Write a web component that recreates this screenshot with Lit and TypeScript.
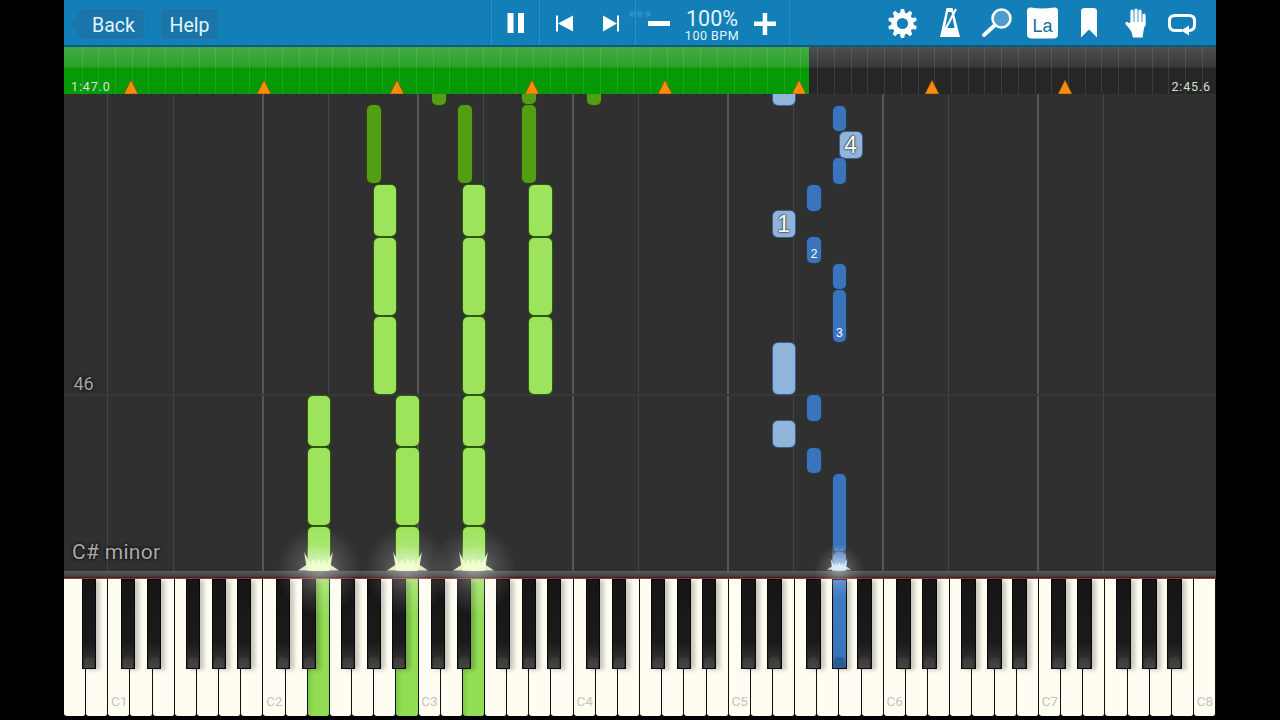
import { LitElement, html, css, svg } from "lit";
import { customElement } from "lit/decorators.js";

type N = [number, number, number, number, string, string?];
const DG = "dg", LG = "lg", B = "bl", LB = "lb";
const notes: N[] = [
  [367, 105, 14, 78, DG], [457.5, 105, 14, 78, DG], [522, 105, 14, 78, DG],
  [432, 90, 14, 14.5, DG], [522, 90, 14, 14, DG], [586.5, 90, 14, 14.5, DG],
  [373.5, 185, 22.5, 51, LG], [373.5, 238, 22.5, 77, LG], [373.5, 316.5, 22.5, 77, LG],
  [462.5, 185, 22.5, 51, LG], [462.5, 238, 22.5, 77, LG], [462.5, 316.5, 22.5, 77, LG],
  [529, 185, 22.5, 51, LG], [529, 238, 22.5, 77, LG], [529, 316.5, 22.5, 77, LG],
  [307.5, 395.5, 22.5, 50.5, LG], [307.5, 447.5, 22.5, 77, LG], [307.5, 526.5, 22.5, 44, LG],
  [396, 395.5, 22.5, 50.5, LG], [396, 447.5, 22.5, 77, LG], [396, 526.5, 22.5, 44, LG],
  [462.5, 395.5, 22.5, 50.5, LG], [462.5, 447.5, 22.5, 77, LG], [462.5, 526.5, 22.5, 44, LG],
  [772.5, 90, 22.5, 14.5, LB], [772.5, 211, 22.5, 25.5, LB, "1"], [839.5, 132, 22.5, 26, LB, "4"],
  [772.5, 342.5, 22.5, 51, LB], [772.5, 421, 22.5, 25.5, LB],
  [832.5, 105.5, 13.5, 25.5, B], [832.5, 158, 13.5, 25.5, B], [807, 185, 14, 25.5, B],
  [807, 237, 14, 26, B, "2"], [832.5, 263.5, 13.5, 25.5, B], [832.5, 290, 13.5, 52, B, "3"],
  [807, 395, 14, 25.5, B], [807, 447.5, 14, 25.5, B], [832.5, 473.5, 13.5, 78, B], [832.5, 552, 13.5, 19, B],
];
const strong = [262, 417, 572, 727, 882, 1037];
const weak = [107, 173, 328, 483, 638, 793, 948, 1103];
const ticks = Array.from({ length: 69 }, (_, i) => 64 + 17.5 + i * 16.72);
const marks = [131, 264, 397, 532, 665, 799, 932, 1065];
const whites = Array.from({ length: 52 }, (_, i) => i);
const blackOffsets = [19.7, 45.7, 84.7, 110.7, 135.7];
const blacks = [89, ...Array.from({ length: 7 }, (_, o) => blackOffsets.map((b) => 108.3 + o * 155.06 + b)).flat()];
const hitWhite: Record<number, string> = { 11: "g", 15: "g", 18: "g" };
const labels: Record<number, string> = { 2: "C1", 9: "C2", 16: "C3", 23: "C4", 30: "C5", 37: "C6", 44: "C7", 51: "C8" };
const glows: [number, string][] = [[318.5, "gg"], [407, "gg"], [473.5, "gg"], [839, "gb"]];

const spark = (color: string) => svg`<svg class="sv" viewBox="0 0 40 20" preserveAspectRatio="none"><path d="M0 19.5 8 14 6 1 12 13 15 8 17 13 20 7 23 13 25 8 28 13 34 1 32 14 40 19.5Z" fill="${color}" opacity=".9"/></svg>`;

@customElement("app-root")
export class AppRoot extends LitElement {
  static styles = css`
    :host { display: block; width: 1280px; height: 720px; background: #000; font-family: "Roboto", "Liberation Sans", sans-serif; overflow: hidden; }
    .app { position: relative; width: 1152px; height: 720px; margin: 0 auto; background: #303030; overflow: hidden; }
    .top { height: 45px; background: #127fb9; border-bottom: 2px solid #0b5a80; display: flex; align-items: center; position: relative; }
    .btn { height: 32px; margin-top: 3px; padding-top: 2px; background: #1a75aa; border: 1px solid #1f7db2; border-radius: 4px; color: #e4f4fb; font-size: 19.5px; display: flex; align-items: center; justify-content: center; box-sizing: border-box; }
    .back { width: 74px; margin-left: 7px; padding-left: 11px; clip-path: polygon(0 50%, 11px 0, 100% 0, 100% 100%, 11px 100%); }
    .help { width: 59px; margin-left: 15px; }
    .sep { position: absolute; top: 0; width: 1px; height: 45px; background: #2b90c6; }
    .ico { position: absolute; top: 0; display: block; }
    .la { position: absolute; left: 963px; top: 14px; width: 31px; text-align: center; font-size: 18px; line-height: 24px; color: #0f6f9f; font-family: "Liberation Sans", sans-serif; }
    .pct { position: absolute; left: 608px; top: 9px; width: 80px; text-align: center; color: #e6f5fc; font-size: 21.5px; font-weight: 400; line-height: 20px; }
    .bpm { position: absolute; left: 608px; top: 29px; width: 80px; text-align: center; color: #e6f5fc; font-size: 12.5px; line-height: 14px; letter-spacing: .5px; white-space: nowrap; }
    .dots { position: absolute; left: 565px; top: 11px; display: flex; gap: 2.5px; }
    .dots i { width: 5.5px; height: 5.5px; border-radius: 50%; background: #2a8cc2; }
    .timeline { position: relative; height: 47px; background: linear-gradient(#4f4f4f 0, #383838 20px, #262626 21px, #262626 100%); overflow: hidden; }
    .played { position: absolute; left: 0; top: 0; bottom: 0; width: 745px; background: linear-gradient(#42aa42 0, #2aa02a 20px, #079a07 21px, #059905 100%); }
    .tick { position: absolute; top: 0; bottom: 0; width: 1px; background: rgba(255,255,255,.1); }
    .mark { position: absolute; bottom: 0; width: 14px; height: 14px; }
    .time { position: absolute; top: 32px; color: #d8e0d8; font-size: 12.5px; line-height: 15px; letter-spacing: .85px; }
    .roll { position: absolute; left: 0; top: 94px; width: 1152px; height: 477px; overflow: hidden; background: #303030; }
    .v { position: absolute; top: 0; bottom: 0; }
    .v.s { width: 2px; background: #555; }
    .v.t { width: 1px; background: #444; }
    .h { position: absolute; left: 0; right: 0; top: 300px; height: 2px; background: #383838; }
    .note { position: absolute; box-sizing: border-box; border-radius: 5px; display: flex; align-items: flex-end; justify-content: center; color: #fff; }
    .dg { background: #539e12; box-shadow: 0 0 0 1px rgba(40,80,10,.5); }
    .lg { background: #9ee35c; box-shadow: 0 0 0 1px #2a5c0a; border-radius: 5px; }
    .bl { background: #3a74bd; box-shadow: 0 0 0 1px rgba(35,60,95,.6); }
    .lb { background: #90b4da; box-shadow: 0 0 0 1px #3a5f90; border-radius: 5px; }
    .lb.big { font-size: 23px; align-items: center; line-height: 26px; text-shadow: 0 0 2px #222, 0 0 2px #222; font-family: "Liberation Sans", sans-serif; }
    .bl.big { font-size: 12px; line-height: 18px; font-family: "Liberation Sans", sans-serif; }
    .label { position: absolute; color: #ababab; text-shadow: 0 0 3px #111, 0 0 3px #111; }
    .measure { left: 9.5px; top: 281px; font-size: 18px; line-height: 18px; color: #a5a5a5; }
    .key { left: 8px; top: 447px; font-size: 21px; line-height: 22px; letter-spacing: .3px; }
    .rail { position: absolute; left: 0; top: 571px; width: 1152px; height: 7px; background: linear-gradient(#5c5c5c, #3c3c3c 85%, #1c1c1c); }
    .keys { position: absolute; left: 0; top: 578px; width: 1152px; height: 142px; background: #000; border-top: 1px solid #b03030; box-sizing: border-box; }
    .whites { display: flex; height: 137px; }
    .wk { position: relative; flex: 1 1 0; background: #fffdf2; border-right: 1.5px solid #111; border-radius: 0 0 3px 3px; box-sizing: border-box; }
    .wk.g { background: linear-gradient(90deg, #7fc94a, #93dd55 30%, #93dd55); }
    .wk span { position: absolute; right: 2px; bottom: 8px; font-size: 13.5px; line-height: 14px; color: #c4c4bc; }
    .k { position: absolute; top: 0; width: 14.5px; height: 90px; background: linear-gradient(#151515, #1a1a1a 70%, #2c2c2c 88%); border: 1px solid #080808; box-sizing: border-box; box-shadow: 4px 1px 4px rgba(0,0,0,.22); }
    .k::after { content: ""; position: absolute; left: 1px; right: 1px; bottom: 0; height: 11px; background: linear-gradient(#383838, #454545); clip-path: polygon(25% 0, 75% 0, 100% 30%, 100% 100%, 0 100%, 0 30%); }
    .k.b { background: linear-gradient(#3f7cc4, #3b74bb 85%, #2d5d99); }
    .k.b::after { background: #2c5a96; }
    .glow { position: absolute; top: 526px; width: 84px; height: 90px; background: radial-gradient(ellipse closest-side, rgba(255,255,255,.36), rgba(255,255,255,.12) 55%, rgba(255,255,255,0)); pointer-events: none; }
    .glow.small { top: 545px; height: 52px; width: 50px; }
    .heat { position: absolute; top: 545px; height: 26px; background: linear-gradient(rgba(255,255,255,0), rgba(255,255,255,.6)); }
    .burst { position: absolute; top: 551px; width: 41px; height: 20px; }
    .burst.small { top: 558px; width: 24px; height: 12px; }
    .sv { display: block; width: 100%; height: 100%; }
  `;
  private icons() {
    const I = (x: number, w: number, c: unknown) => html`<svg class="ico" style="left:${x}px" width=${w} height="45" viewBox="0 0 ${w} 45">${c}</svg>`;
    const W = "#fff";
    const teeth = Array.from({ length: 10 }, (_, i) => i * 36);
    return html`
      ${I(438, 26, svg`<rect x="5.5" y="13" width="6" height="20" fill="${W}"/><rect x="16" y="13" width="6" height="20" fill="${W}"/>`)}
      ${I(490, 24, svg`<rect x="2" y="15.5" width="2" height="16" fill="${W}"/><path d="M4 23.5 19 15.5V31.5Z" fill="${W}"/>`)}
      ${I(536, 24, svg`<rect x="17" y="15.5" width="2" height="16" fill="${W}"/><path d="M17 23.5 3 15.5V31.5Z" fill="${W}"/>`)}
      ${I(583, 24, svg`<rect x="1" y="21" width="22" height="5" fill="${W}"/>`)}
      ${I(690, 24, svg`<rect x="0" y="21.5" width="22" height="4.5" fill="${W}"/><rect x="8.7" y="13" width="4.5" height="22" fill="${W}"/>`)}
      ${I(824, 30, svg`<g transform="translate(14.5 23.5)"><circle r="8.3" fill="none" stroke="${W}" stroke-width="5.4"/>${teeth.map((a) => svg`<path d="M-2.8 -9.5 -1.6 -14.5H1.6L2.8 -9.5Z" fill="${W}" transform="rotate(${a})"/>`)}</g>`)}
      ${I(875, 22, svg`<path d="M7.5 8H13.5L21 37H1Z" fill="${W}"/><path d="M9 12H12.5L15.5 28H6Z" fill="#127fb9"/><path d="M6 30 17 9" stroke="${W}" stroke-width="2.2"/><path d="M4.5 28H17L18 31H4Z" fill="${W}"/>`)}
      ${I(915, 34, svg`<circle cx="22.5" cy="18.5" r="9" fill="#4d9ccb" stroke="${W}" stroke-width="2.6"/><path d="M15.5 25.5 5 35" stroke="${W}" stroke-width="4" stroke-linecap="round"/>`)}
      ${I(963, 31, svg`<path d="M0 11Q0 7 4 7.5Q15 9.5 27 7.5Q31 7 31 11V34Q31 38.5 26.5 38.5H4.5Q0 38.5 0 34Z" fill="${W}"/>`)}
      <span class="la">La</span>
      ${I(1014, 22, svg`<path d="M3 11Q3 8 7 8H15Q19 8 19 11V37.5L11 29.5 3 37.5Z" fill="${W}"/>`)}
      ${I(1058, 28, svg`<g stroke="${W}" stroke-width="3.2" stroke-linecap="round" fill="none"><path d="M10 24V11"/><path d="M14 23V10"/><path d="M18 23V11"/><path d="M22 25V15"/><path d="M5 23.5 10 29"/></g><path d="M8.5 22H23.5L21.5 31 20.5 37.5H11L9.5 32 5 25Z" fill="${W}"/>`)}
      ${I(1104, 30, svg`<path d="M14 30.5H7Q1.5 30.5 1.5 25V20.5Q1.5 15.5 7 15.5H21Q26.5 15.5 26.5 20.5V25Q26.5 30.5 21 30.5H19" fill="none" stroke="${W}" stroke-width="3"/><path d="M13 30.5 21 25.5V35.5Z" fill="${W}"/>`)}
    `;
  }
  render() {
    return html`<div class="app">
      <div class="top">
        <div class="btn back">Back</div><div class="btn help">Help</div>
        ${[427, 475, 571, 725].map((x) => html`<div class="sep" style="left:${x}px"></div>`)}
        <div class="dots"><i></i><i></i><i></i></div>
        ${this.icons()}
        <div class="pct">100%</div><div class="bpm">100 BPM</div>
      </div>
      <div class="timeline">
        <div class="played"></div>
        ${ticks.map((x) => html`<div class="tick" style="left:${x - 64}px"></div>`)}
        ${marks.map((x) => html`<svg class="mark" style="left:${x - 71}px" viewBox="0 0 14 14"><path d="M7 0 14 14H0Z" fill="#ff8a0c" stroke="#7a4a10" stroke-width=".6"/></svg>`)}
        <div class="time" style="left:7px">1:47.0</div>
        <div class="time" style="right:5px">2:45.6</div>
      </div>
      <div class="roll">
        ${weak.map((x) => html`<div class="v t" style="left:${x - 64}px"></div>`)}
        ${strong.map((x) => html`<div class="v s" style="left:${x - 64}px"></div>`)}
        <div class="h"></div>
        ${notes.map(([x, y, w, h, c, t]) => html`<div class="note ${c} ${t ? "big" : ""}" style="left:${x - 64}px;top:${y - 94}px;width:${w}px;height:${h}px">${t ?? ""}</div>`)}
        <div class="label measure">46</div>
        <div class="label key">C# minor</div>
      </div>
      <div class="rail"></div>
      <div class="keys">
        <div class="whites">
          ${whites.map((i) => html`<div class="wk ${hitWhite[i] ?? ""}">${labels[i] ? html`<span>${labels[i]}</span>` : ""}</div>`)}
        </div>
        ${blacks.map((x) => html`<div class="k ${Math.abs(x - 839) < 2 ? "b" : ""}" style="left:${x - 64 - 7.2}px"></div>`)}
      </div>
      ${glows.map(([x, c]) => {
        const small = c === "gb";
        const gw = small ? 50 : 84;
        const bw = small ? 24 : 41;
        const nw = small ? 13.5 : 22.5;
        return html`
          <div class="glow ${small ? "small" : ""}" style="left:${x - 64 - gw / 2}px"></div>
          <div class="heat" style="left:${x - 64 - nw / 2}px;width:${nw}px"></div>
          <div class="burst ${small ? "small" : ""}" style="left:${x - 64 - bw / 2}px">${spark(small ? "#dcefff" : "#f2ffd0")}</div>`;
      })}
    </div>`;
  }
}
